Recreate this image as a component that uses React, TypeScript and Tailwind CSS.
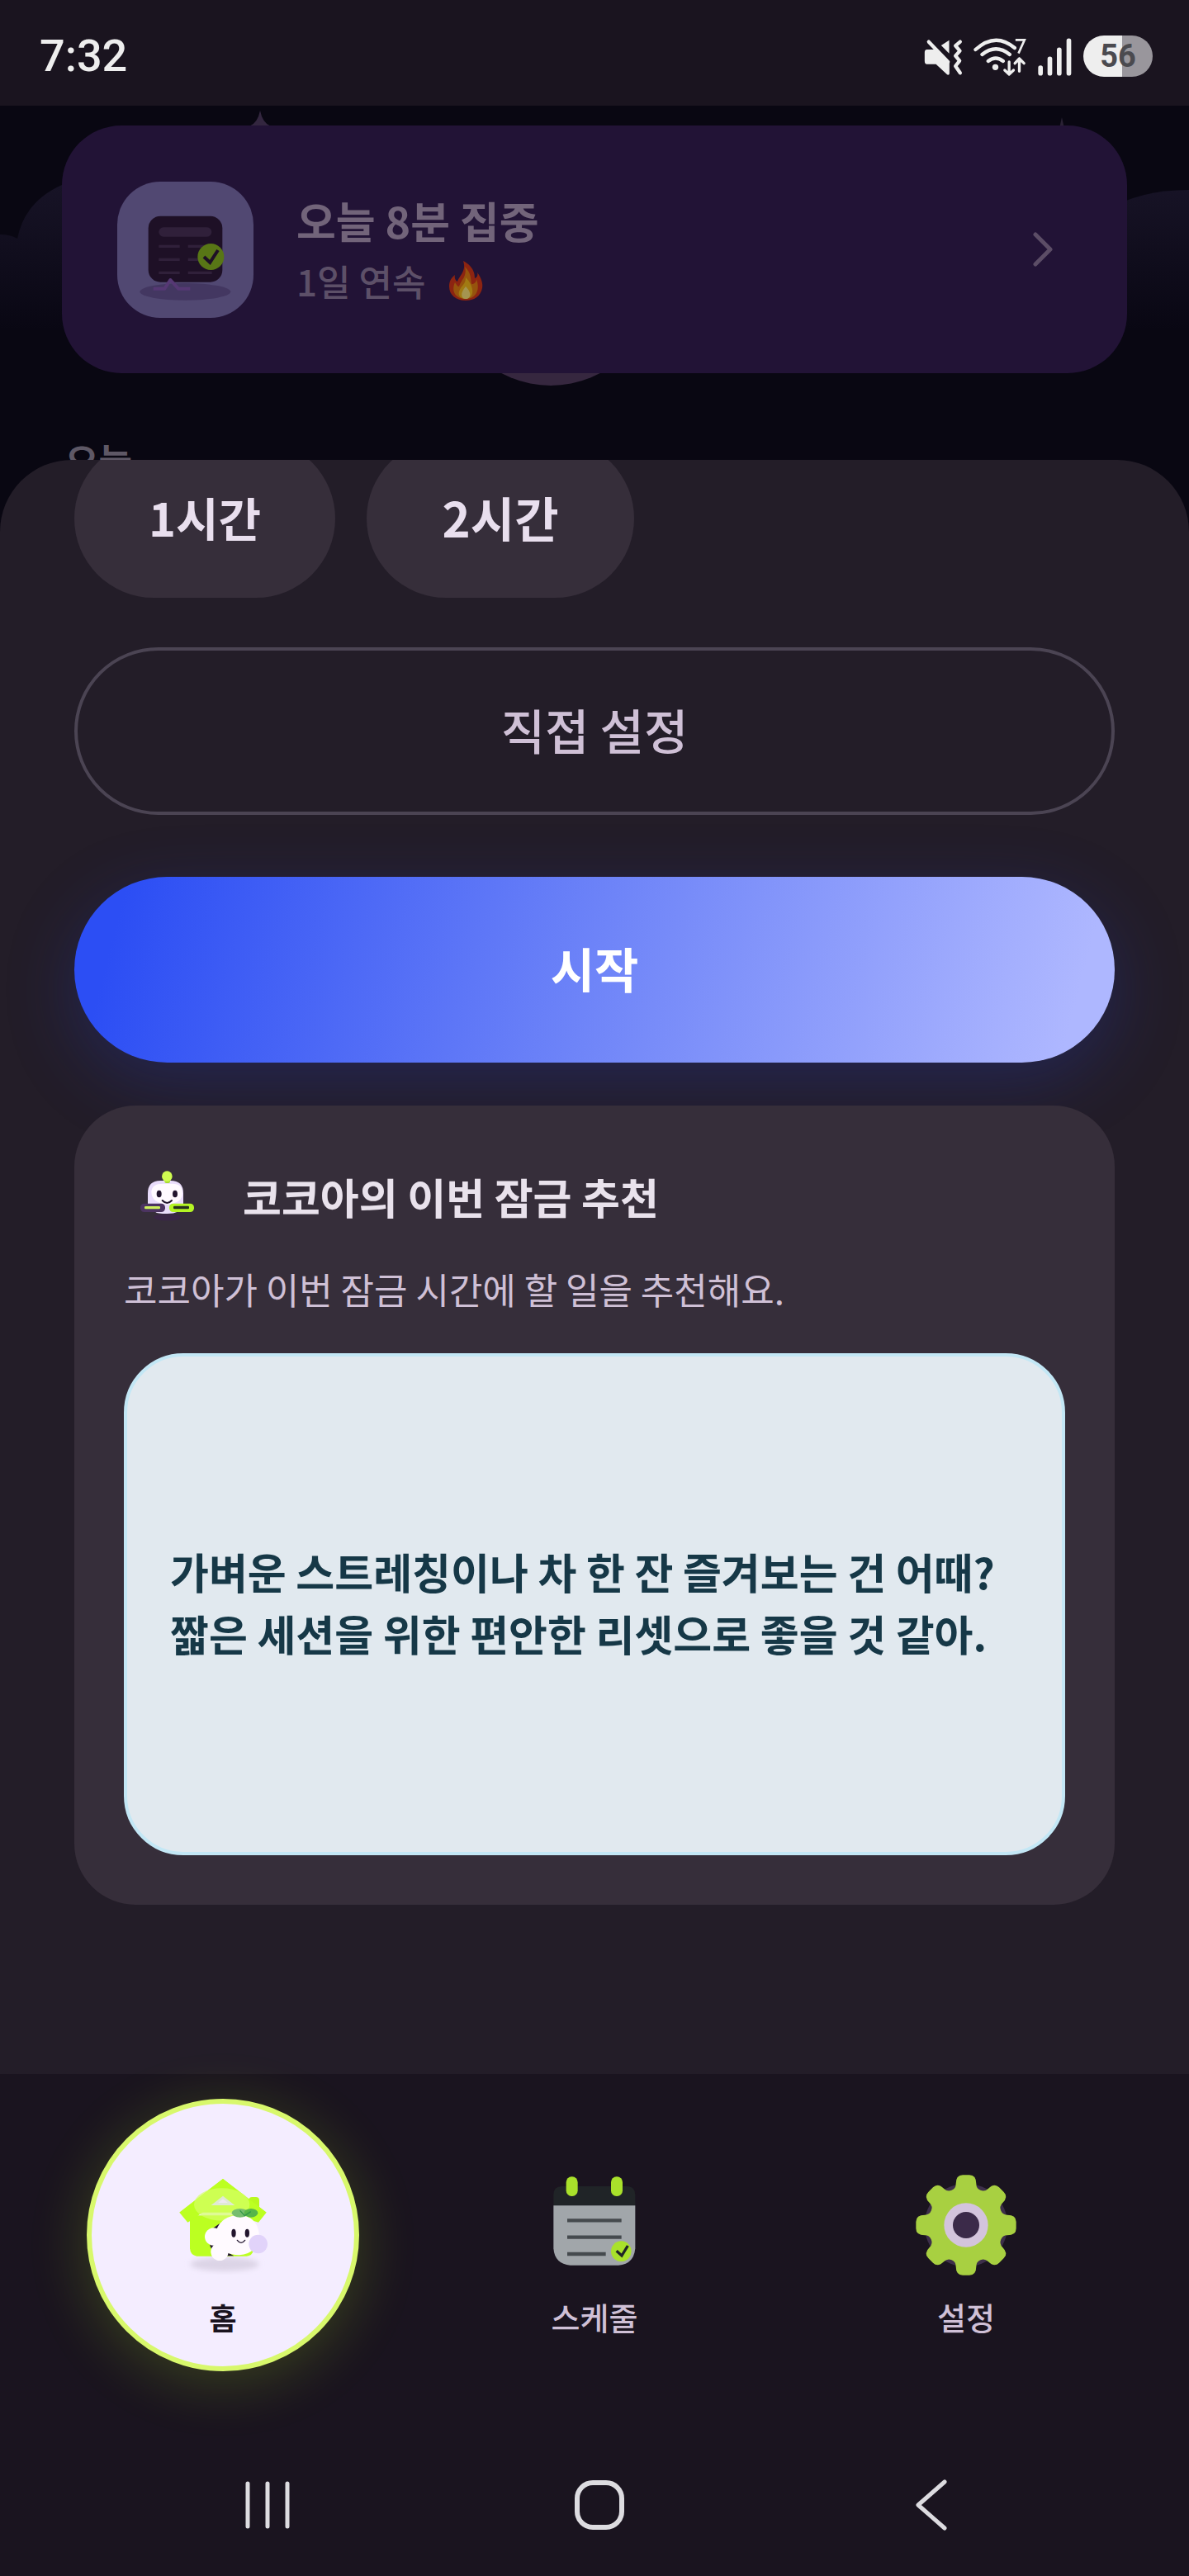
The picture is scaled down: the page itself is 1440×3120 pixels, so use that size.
import React from "react";

const FONT = "font-['Noto_Sans_CJK_KR','Noto_Sans',sans-serif]";

function StatusBar() {
  return (
    <header className="flex h-32 items-center justify-between bg-[#1a141f] pl-12 pr-11 pt-2">
      <time className="font-[Roboto,sans-serif] text-[54px] font-medium leading-[64px] text-[#eeeeee]">7:32</time>
      <div className="flex items-center">
        <svg viewBox="50 30 560 165" className="h-[55px] w-[187px]" fill="none" stroke="#eeeeee" strokeLinecap="round" strokeLinejoin="round" role="img" aria-label="무음, 와이파이, 신호">
          <path d="M76 59 L146 132" strokeWidth="13" />
          <path d="M69 92 H100 L146 133 V174 L104 135 H69 Q66 135 66 128 V98 Q66 92 69 92Z" fill="#eeeeee" strokeWidth="10" />
          <path d="M121 72 L150 53 V101Z" fill="#eeeeee" stroke="none" />
          <path d="M190 59 L173 73 L189 92 L173 110 L188 128 L173 147 L190 172" strokeWidth="13" />
          <path d="M246 87 Q318 22 388 81 M270 105 Q320 65 370 105 M292 129 Q319 108 346 129" strokeWidth="13" />
          <circle cx="318" cy="151" r="11" fill="#eeeeee" stroke="none" />
          <path d="M391 52 H424 L402 101" strokeWidth="8" strokeLinecap="butt" strokeLinejoin="miter" />
          <path d="M368 132 V176 M352 162 L368 177 L384 162 M405 166 V120 M389 137 L405 120 L422 137" strokeWidth="10" />
          <path d="M482 153 V173 M516 121 V173 M550 88 V173 M585 55 V173" strokeWidth="17" />
        </svg>
        <div className="ml-[9px] flex h-[50px] w-[84px] items-center justify-center rounded-full bg-[linear-gradient(90deg,#eeeeee_56%,#99969c_56%)] font-[Roboto,sans-serif] text-[38px] font-bold leading-none text-[#4b4a4f]">
          56
        </div>
      </div>
    </header>
  );
}

function NightSky() {
  return (
    <svg className="absolute inset-x-0 top-0 h-[560px] w-full" viewBox="0 128 1440 560" preserveAspectRatio="none" aria-hidden="true">
      <defs>
        <linearGradient id="cloud" x1="0" y1="225" x2="0" y2="400" gradientUnits="userSpaceOnUse">
          <stop offset="0" stopColor="#171326" />
          <stop offset="1" stopColor="#090713" />
        </linearGradient>
      </defs>
      <path d="M0 284 Q12 284 21 289 Q30 244 75 224 H150 V400 H0Z" fill="url(#cloud)" />
      <path d="M1340 255 Q1380 230 1440 230 V400 H1340Z" fill="url(#cloud)" />
      <path d="M315 134 Q318 149 328 153 V170 H302 V153 Q312 149 315 134Z" fill="#33263f" />
      <path d="M1286 142 L1290 160 H1282Z" fill="#2a2234" />
      <circle cx="667" cy="340" r="127" fill="#36273f" />
    </svg>
  );
}

function ReportIcon() {
  return (
    <svg viewBox="38 58 495 495" className="size-full" aria-hidden="true">
      <ellipse cx="285" cy="458" rx="165" ry="31" fill="#433761" />
      <rect x="151" y="183" width="269" height="240" rx="44" fill="#1e1026" />
      <rect x="189" y="224" width="192" height="34" rx="17" fill="#30203a" />
      <path d="M189 293 H265 M295 293 H382 M189 341 H265 M295 341 H382 M189 389 H265 M295 389 H382" stroke="#30203a" strokeWidth="10" />
      <path d="M169 447 H210 L231 415 L260 447 H303" fill="none" stroke="#563874" strokeWidth="12" strokeLinejoin="round" />
      <circle cx="378" cy="331" r="48" fill="#587616" />
      <path d="M353 331 L375 352 L404 307" fill="none" stroke="#1e1026" strokeWidth="12" />
    </svg>
  );
}

function Flame() {
  return (
    <svg viewBox="0 0 42 48" className="h-12 w-[42px]" role="img" aria-label="불꽃">
      <path d="M18 0 C31 7 32 16 32 21 C35 20 36 17 35 14 C40 21 42 27 41 33 C39 43 31 48 21 48 C9 48 1 41 1 31 C1 24 4 20 8 17 C7 21 9 24 11 25 C14 17 22 12 18 0Z" fill="#8c2411" />
      <path d="M20 7 C28 15 27 22 28 28 C31 28 34 26 34 22 C39 36 33 46 21 46 C9 46 3 37 8 26 C10 29 11 31 13 31 C16 22 23 19 20 7Z" fill="#96530d" />
      <path d="M21 20 C30 29 34 44 21 46 C8 45 13 34 18 29 C20 26 21 24 21 20Z" fill="#a17a12" />
      <path d="M21 31 C29 39 27 46 21 46 C15 46 14 39 21 31Z" fill="#a59550" />
    </svg>
  );
}

function FocusHeader() {
  return (
    <section className="relative bg-[#090712] px-[75px] pb-3 pt-6">
      <NightSky />
      <button type="button" className="relative flex h-[300px] w-full items-center rounded-[72px] bg-[#221336] pl-[67px] pr-[90px] text-left">
        <span className="size-[165px] shrink-0 overflow-hidden rounded-[52px] bg-[#514872]">
          <ReportIcon />
        </span>
        <span className="ml-[52px] flex grow flex-col">
          <span className="text-[52px] font-bold leading-[75px] text-[#72647a]">오늘 8분 집중</span>
          <span className="flex items-center gap-7 text-[44px] font-medium leading-[72px] text-[#5d5068]">
            1일 연속
            <Flame />
          </span>
        </span>
        <svg viewBox="0 0 24 42" className="h-[42px] w-6" fill="none" stroke="#5c4d66" strokeWidth="5" strokeLinecap="round" strokeLinejoin="round" aria-hidden="true">
          <path d="M3 3 L21 21 L3 39" />
        </svg>
      </button>
      <h2 className="relative ml-1 mt-[75px] text-[44px] font-bold leading-[60px] text-[#5e5866]">오늘</h2>
      <div className="h-[60px]" />
    </section>
  );
}

function Avatar() {
  return (
    <svg viewBox="30 57 324 324" className="size-[108px] shrink-0" aria-hidden="true">
      <ellipse cx="188" cy="283" rx="50" ry="12" fill="#3a2647" />
      <path d="M117 196 Q117 150 163 150 H200 Q246 150 246 196 V240 Q236 270 188 270 Q150 270 145 264 L117 240Z" fill="#e9dcfb" />
      <path d="M130 190 Q132 161 172 161 H206 Q243 161 243 195 Q243 232 188 236 Q130 232 130 190Z" fill="#fffaff" />
      <rect x="178" y="140" width="20" height="19" rx="6" fill="#a8dc2e" />
      <circle cx="187" cy="134" r="19" fill="#cffc50" />
      <ellipse cx="158" cy="198" rx="9" ry="13" fill="#22152e" />
      <ellipse cx="216" cy="198" rx="9" ry="13" fill="#22152e" />
      <path d="M170 222 Q187 240 204 222" fill="none" stroke="#22152e" strokeWidth="6" strokeLinecap="round" />
      <rect x="90" y="233" width="90" height="31" rx="14" fill="#4c3461" />
      <rect x="105" y="243" width="57" height="10" rx="4" fill="#cdf05c" />
      <rect x="195" y="233" width="90" height="31" rx="14" fill="#b4f524" />
      <rect x="210" y="242" width="57" height="11" rx="4" fill="#26301d" />
    </svg>
  );
}

function LockSheet() {
  return (
    <main className="relative -mt-[102px] overflow-hidden rounded-t-[87px] bg-[#231d28] px-[90px] pb-[205px]">
      <div className="-mt-[25px] flex gap-[38px]">
        <button type="button" className="h-48 rounded-full bg-[#362e3a] px-[90px] pb-1 text-[56px] font-bold text-[#e9dfee]">1시간</button>
        <button type="button" className="h-48 min-w-[324px] rounded-full bg-[#362e3a] px-[90px] pb-1 text-[58px] font-bold text-[#e9dfee]">2시간</button>
      </div>
      <button type="button" className="mt-[60px] h-[203px] w-full rounded-full border-4 border-[#4b4453] pb-1 text-[58px] font-medium text-[#cfc0d6]">
        직접 설정
      </button>
      <button
        type="button"
        className="mt-[75px] h-[225px] w-full rounded-full bg-[linear-gradient(105deg,#2c4ef4_5%,#6e84f8_50%,#aeb7ff_95%)] pb-1 text-[58px] font-bold text-white shadow-[0_24px_84px_rgba(40,60,190,0.28)]"
      >
        시작
      </button>
      <section className="relative mt-[52px] rounded-[74px] bg-[#362e3a] p-[60px]">
        <div className="flex items-center gap-9">
          <Avatar />
          <h2 className="pb-2 text-[51px] font-bold leading-[72px] text-[#e9e2ec]">코코아의 이번 잠금 추천</h2>
        </div>
        <p className="mt-6 text-[44px] leading-[60px] text-[#cfc0d6]">코코아가 이번 잠금 시간에 할 일을 추천해요.</p>
        <div className="mt-12 flex min-h-[608px] items-center rounded-[72px] border-4 border-[#c3e7f5] bg-[#e1e9ef] px-[52px] pb-1">
          <p className="text-[51px] font-bold leading-[75px] text-[#163847]">
            가벼운 스트레칭이나 차 한 잔 즐겨보는 건 어때?
            <br />
            짧은 세션을 위한 편안한 리셋으로 좋을 것 같아.
          </p>
        </div>
      </section>
    </main>
  );
}

function HomeIcon() {
  return (
    <svg viewBox="450 465 360 360" className="size-[120px]" aria-hidden="true">
      <defs>
        <filter id="soft" x="-20%" y="-60%" width="140%" height="220%">
          <feGaussianBlur stdDeviation="9" />
        </filter>
      </defs>
      <ellipse cx="636" cy="787" rx="125" ry="25" fill="#dcd4e6" filter="url(#soft)" />
      <path d="M724 590 V555 Q724 543 736 543 H750 Q762 543 762 555 V600Z" fill="#b9f91f" />
      <path d="M510 610 H742 V735 Q736 757 716 758 H535 Q512 755 510 730Z" fill="#bcff21" />
      <path d="M630 477 L788 599 L759 635 L742 630 L630 545 L520 625 L502 635 L472 599Z" fill="#bcff21" />
      <path d="M630 477 L788 599 H472Z" fill="#bcff21" />
      <ellipse cx="626" cy="570" rx="101" ry="59" fill="#d5ff68" opacity="0.7" />
      <path d="M587 573 L630 539 L673 573Z" fill="#dfe9d3" />
      <path d="M612 564 L630 550 L648 564Z" fill="#eee9ef" />
      <path d="M592 658 L617 640 L640 740 L670 757 H600 L583 720Z" fill="#22152e" />
      <circle cx="596" cy="687" r="32" fill="#fffaff" />
      <circle cx="618" cy="742" r="32" fill="#fffaff" />
      <path d="M605 665 Q625 610 690 609 Q755 612 762 680 Q757 748 690 754 Q630 752 600 715Z" fill="#fffaff" />
      <ellipse cx="692" cy="601" rx="30" ry="16" fill="#76bd6e" />
      <ellipse cx="732" cy="601" rx="25" ry="16" fill="#57b54a" />
      <path d="M692 592 L709 611 L731 596" fill="none" stroke="#319748" strokeWidth="4" />
      <ellipse cx="669" cy="674" rx="8" ry="15" fill="#22152e" />
      <ellipse cx="718" cy="674" rx="8" ry="15" fill="#22152e" />
      <path d="M682 700 Q696 718 710 700" fill="none" stroke="#22152e" strokeWidth="4" strokeLinecap="round" />
      <circle cx="758" cy="714" r="34" fill="#e1d3fa" />
    </svg>
  );
}

function ScheduleIcon() {
  return (
    <svg viewBox="180 165 360 360" className="size-[120px]" aria-hidden="true">
      <path d="M211 274 V235 Q211 204 242 204 H477 Q508 204 508 235 V274Z" fill="#202427" />
      <path d="M211 274 H508 V430 Q503 487 447 491 H272 Q216 487 211 430Z" fill="#a1a6aa" />
      <path d="M261 328 H458 M261 389 H458 M261 450 H401" stroke="#454a4e" strokeWidth="13" />
      <rect x="257" y="169" width="42" height="71" rx="20" fill="#a9e12b" />
      <rect x="420" y="169" width="42" height="71" rx="20" fill="#a9e12b" />
      <circle cx="457" cy="440" r="37" fill="#a9e12b" />
      <path d="M440 439 L459 456 L481 420" fill="none" stroke="#202427" strokeWidth="10" />
    </svg>
  );
}

function gearOutline() {
  const at = (k: number, x: number, y: number) => {
    const a = (k * Math.PI) / 4;
    return `${(x * Math.cos(a) - y * Math.sin(a)).toFixed(1)} ${(x * Math.sin(a) + y * Math.cos(a)).toFixed(1)}`;
  };
  let d = `M${at(0, -37, -150)}`;
  for (let k = 0; k < 8; k++) {
    d += ` Q${at(k, -37, -182)} ${at(k, -12, -182)} L${at(k, 12, -182)} Q${at(k, 37, -182)} ${at(k, 37, -150)}`;
    d += ` A25 25 0 0 0 ${at(k + 1, -37, -150)}`;
  }
  return d + "Z";
}

function SettingsIcon() {
  return (
    <svg viewBox="-180 -180 360 360" className="size-[120px] overflow-visible" aria-hidden="true">
      <circle r="151" fill="#3d2f4a" />
      <path d={gearOutline()} fill="#a8d041" />
      <circle r="80" fill="#d3c4dc" />
      <circle r="48" fill="#3b2a49" />
    </svg>
  );
}

const TABS = [
  { label: "홈", icon: <HomeIcon />, active: true },
  { label: "스케줄", icon: <ScheduleIcon />, active: false },
  { label: "설정", icon: <SettingsIcon />, active: false },
];

function TabBar() {
  return (
    <nav className="relative grid grid-cols-3 justify-items-center bg-[#1a141f] px-[45px] pb-[75px] pt-[30px]">
      {TABS.map((t) => (
        <button
          key={t.label}
          type="button"
          aria-current={t.active ? "page" : undefined}
          className={
            t.active
              ? "flex size-[330px] flex-col items-center gap-[27px] rounded-full border-[6px] border-[#d8f86c] bg-[#f4edff] pt-[87px] text-[#1a141f] shadow-[0_12px_72px_rgba(190,255,30,0.2)]"
              : "flex size-[330px] flex-col items-center gap-[27px] rounded-full border-[6px] border-transparent pt-[87px] text-[#cfc0d6]"
          }
        >
          {t.icon}
          <span className={t.active ? "text-[36px] font-bold leading-[48px]" : "text-[38px] font-medium leading-[48px]"}>{t.label}</span>
        </button>
      ))}
    </nav>
  );
}

function SystemBar() {
  return (
    <footer className="relative grid h-[173px] grid-cols-3 items-center justify-items-center pl-[123px] pr-[111px]">
      <button type="button" aria-label="최근 앱">
        <svg viewBox="0 0 64 64" className="size-16" stroke="#dddce0" strokeWidth="5" strokeLinecap="round">
          <path d="M8 6 V58 M32 6 V58 M56 6 V58" />
        </svg>
      </button>
      <button type="button" aria-label="홈 화면">
        <svg viewBox="0 0 64 64" className="size-16" fill="none" stroke="#dddce0" strokeWidth="6">
          <rect x="5" y="5" width="54" height="54" rx="19" />
        </svg>
      </button>
      <button type="button" aria-label="뒤로">
        <svg viewBox="0 0 64 64" className="size-16" fill="none" stroke="#dddce0" strokeWidth="5" strokeLinecap="round" strokeLinejoin="round">
          <path d="M48 4 L16 32 L48 60" />
        </svg>
      </button>
    </footer>
  );
}

export default function App() {
  return (
    <div className={`min-h-screen bg-[#1a141f] ${FONT}`}>
      <StatusBar />
      <FocusHeader />
      <LockSheet />
      <TabBar />
      <SystemBar />
    </div>
  );
}
